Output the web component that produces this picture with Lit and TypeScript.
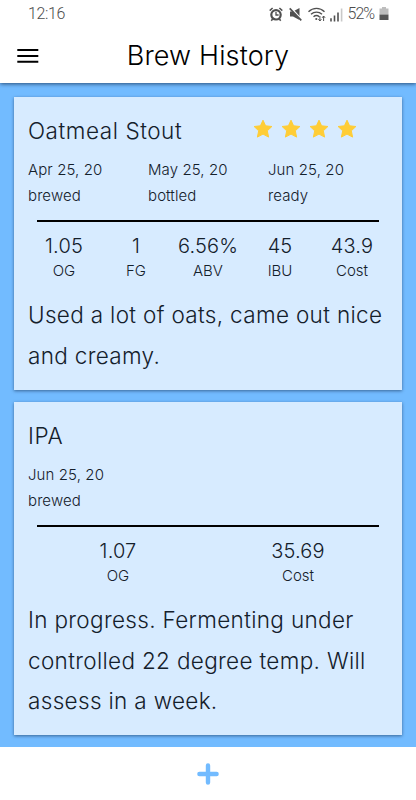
import { LitElement, html, css, svg } from "lit";
import { customElement, property } from "lit/decorators.js";

interface Entry {
  value: string;
  label: string;
}

interface Brew {
  name: string;
  stars: number;
  dates: Entry[];
  stats: Entry[];
  notes: string;
}

const BREWS: Brew[] = [
  {
    name: "Oatmeal Stout",
    stars: 4,
    dates: [
      { value: "Apr 25, 20", label: "brewed" },
      { value: "May 25, 20", label: "bottled" },
      { value: "Jun 25, 20", label: "ready" },
    ],
    stats: [
      { value: "1.05", label: "OG" },
      { value: "1", label: "FG" },
      { value: "6.56%", label: "ABV" },
      { value: "45", label: "IBU" },
      { value: "43.9", label: "Cost" },
    ],
    notes: "Used a lot of oats, came out nice and creamy.",
  },
  {
    name: "IPA",
    stars: 0,
    dates: [{ value: "Jun 25, 20", label: "brewed" }],
    stats: [
      { value: "1.07", label: "OG" },
      { value: "35.69", label: "Cost" },
    ],
    notes: "In progress. Fermenting under controlled 22 degree temp. Will assess in a week.",
  },
];

@customElement("status-bar")
export class StatusBar extends LitElement {
  static styles = css`
    :host {
      display: flex;
      justify-content: space-between;
      align-items: center;
      height: 28px;
      padding: 0 27px 0 28px;
      color: #4c4c4c;
      font: 300 16px/28px Roboto, "Liberation Sans", sans-serif;
    }
    .right {
      display: flex;
      align-items: center;
    }
    .icons {
      display: block;
      width: 76px;
      height: 18px;
      margin-right: 2.5px;
    }
    .time {
      letter-spacing: -0.4px;
    }
    .percent {
      letter-spacing: -1px;
      width: 31.5px;
    }
    .battery {
      display: block;
      width: 10px;
      height: 16px;
    }
  `;

  render() {
    return html`
      <span class="time">12:16</span>
      <div class="right">
        <svg class="icons" viewBox="0 0 76 18" fill="none" stroke="#505050">
          <circle cx="7" cy="9.8" r="4.7" stroke-width="2.2" />
          <path d="M7 7v3h2.6" stroke-width="1.3" />
          <path d="M.7 5.6L3.6 3M13.3 5.6L10.4 3M3.6 14l-1.3 1.8M10.4 14l1.3 1.8" stroke-width="1.5" />
          <path d="M21 6.6h3L30.5 3v12L24 11.6h-3z" fill="#505050" stroke="none" />
          <path d="M21.2 2.6L33 15.2" stroke="#fff" stroke-width="2.2" />
          <path d="M20.7 3.4L32.3 15.4" stroke-width="1.6" />
          <path d="M39.5 6.7C44 2.3 51 2.3 55.5 6.7M42 9.3c3.2-2.9 7.8-2.9 11 0M44.5 11.8c1.8-1.5 4-1.5 5.8 0" stroke-width="1.4" />
          <circle cx="47.3" cy="14" r="1.1" fill="#505050" stroke="none" />
          <path d="M50.9 11v5M49.4 14.2l1.5 1.8 1.5-1.8M54.6 16v-5M53.1 12.8l1.5-1.8 1.5 1.8" stroke-width="1" />
          <path d="M62 13.2v3.3M65.5 10.6v5.9M69 7.6v8.9" stroke-width="1.6" />
          <path d="M72.6 3.5v13" stroke="#c9c9c9" stroke-width="1.6" />
        </svg>
        <span class="percent">52%</span>
        <svg class="battery" viewBox="0 0 10 16">
          <path d="M3 1h4v1.5h2.5v6H.5v-6H3z" fill="#bdbdbd" />
          <path d="M.5 8.5h9V14H.5z" fill="#555" />
        </svg>
      </div>
    `;
  }
}

@customElement("star-rating")
export class StarRating extends LitElement {
  @property({ type: Number }) value = 0;

  static styles = css`
    :host {
      display: flex;
      gap: 7.8px;
    }
    .star {
      display: block;
      width: 20px;
      height: 20px;
    }
  `;

  render() {
    return Array.from(
      { length: this.value },
      () => html`<svg class="star" viewBox="0 0 20 20">
        ${svg`<path d="M10 1.2l2.6 5.6 6.3.7-4.6 4.3 1.3 6.3L10 15.1l-5.6 3 1.3-6.3-4.6-4.3 6.3-.7z"
          fill="#ffcd36" stroke="#ffcd36" stroke-width="1" stroke-linejoin="round" />`}
      </svg>`
    );
  }
}

@customElement("brew-card")
export class BrewCard extends LitElement {
  @property({ attribute: false }) brew!: Brew;

  static styles = css`
    :host {
      display: block;
      box-sizing: border-box;
      padding: 14px 14px 13px;
      background: #d7ebff;
      box-shadow: 0 1px 3px rgba(0, 20, 50, 0.5);
      color: #14202b;
    }
    .head {
      display: flex;
      justify-content: space-between;
      align-items: center;
      height: 40px;
      padding-right: 31.5px;
    }
    .name {
      margin: 0;
      font-size: 22.5px;
      font-weight: 300;
      letter-spacing: 0.55px;
      line-height: 40px;
    }
    .stars {
      margin-top: -5px;
    }
    .dates {
      display: grid;
      grid-template-columns: repeat(3, 120px);
      margin-top: 6px;
      font-size: 15px;
      line-height: 26px;
      letter-spacing: 0.1px;
    }
    .rule {
      height: 2px;
      margin: 11px 9px 10px;
      background: #000;
    }
    .stats {
      display: flex;
    }
    .stat {
      flex: 1;
      text-align: center;
    }
    .value {
      font-size: 20px;
      line-height: 28px;
      letter-spacing: 0.15px;
    }
    .label {
      font-size: 15px;
      line-height: 22px;
    }
    .notes {
      margin: 12.8px 0 0;
      font-size: 22.5px;
      line-height: 40.7px;
      letter-spacing: 0.33px;
    }
  `;

  render() {
    const { name, stars, dates, stats, notes } = this.brew;
    return html`
      <div class="head">
        <h2 class="name">${name}</h2>
        <star-rating class="stars" .value=${stars}></star-rating>
      </div>
      <div class="dates">
        ${dates.map((d) => html`<div><div>${d.value}</div><div>${d.label}</div></div>`)}
      </div>
      <div class="rule"></div>
      <div class="stats">
        ${stats.map(
          (s) => html`<div class="stat">
            <div class="value">${s.value}</div>
            <div class="label">${s.label}</div>
          </div>`
        )}
      </div>
      <p class="notes">${notes}</p>
    `;
  }
}

@customElement("app-root")
export class AppRoot extends LitElement {
  static styles = css`
    :host {
      display: flex;
      flex-direction: column;
      width: 416px;
      height: 800px;
      overflow: hidden;
      background: #fff;
      font-family: Inter, "Liberation Sans", sans-serif;
      font-weight: 300;
      font-optical-sizing: none;
    }
    .top {
      position: relative;
      height: 83px;
      background: #fff;
      box-shadow: 0 1px 4px rgba(0, 20, 50, 0.65);
    }
    .bar {
      display: grid;
      grid-template-columns: 22px 1fr 22px;
      align-items: center;
      height: 55px;
      padding: 0 17px;
    }
    .menu {
      display: block;
      width: 22px;
      height: 16px;
    }
    .title {
      margin: 0;
      text-align: center;
      font-size: 27px;
      font-weight: 300;
      line-height: 55px;
      letter-spacing: 0.15px;
      color: #000;
    }
    .list {
      display: flex;
      flex-direction: column;
      gap: 12px;
      height: 650px;
      box-sizing: content-box;
      padding: 14px 14px 0;
      background: #72bbff;
    }
    .first {
      height: 293px;
    }
    .second {
      height: 333px;
    }
    .foot {
      display: flex;
      justify-content: center;
      align-items: center;
      height: 53px;
      background: #fff;
    }
    .plus {
      display: block;
      width: 22px;
      height: 22px;
    }
  `;

  render() {
    return html`
      <header class="top">
        <status-bar></status-bar>
        <div class="bar">
          <svg class="menu" viewBox="0 0 22 16">
            <path d="M.3 1h21v2H.3zM.3 7h21v2H.3zM.3 12.8h21v2H.3z" />
          </svg>
          <h1 class="title">Brew History</h1>
        </div>
      </header>
      <main class="list">
        <brew-card class="first" .brew=${BREWS[0]}></brew-card>
        <brew-card class="second" .brew=${BREWS[1]}></brew-card>
      </main>
      <footer class="foot">
        <svg class="plus" viewBox="0 0 22 22">
          <path d="M11 2.4v17.2M2.4 11h17.2" stroke="#72bbff" stroke-width="4.4" stroke-linecap="round" />
        </svg>
      </footer>
    `;
  }
}
